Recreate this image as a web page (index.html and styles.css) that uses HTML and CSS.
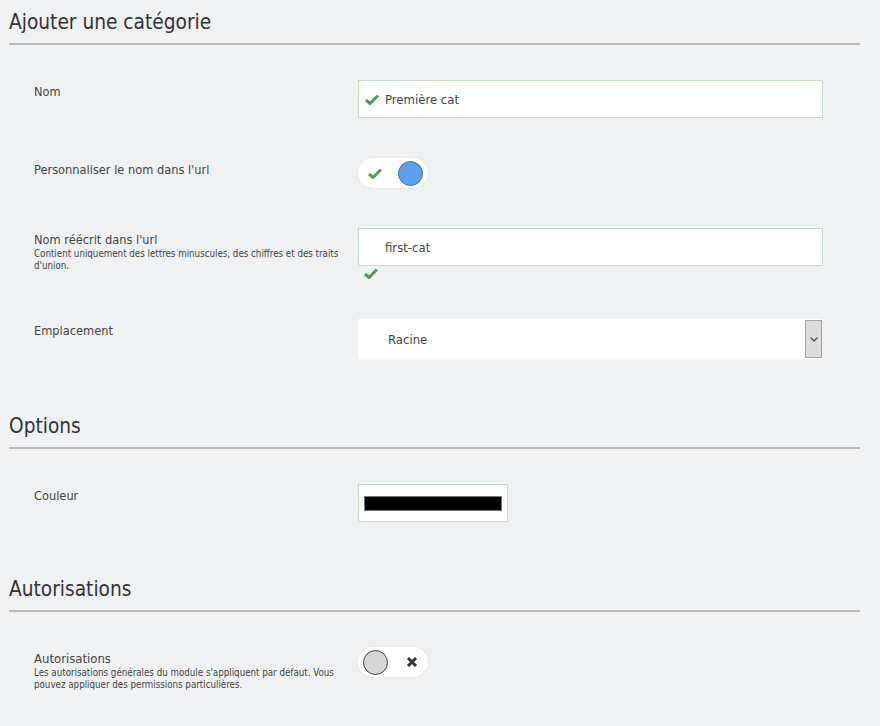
FILE: index.html
```html
<!DOCTYPE html>
<html lang="fr">
<head>
<meta charset="utf-8">
<title>Ajouter une catégorie</title>
<link rel="stylesheet" href="styles.css">
</head>
<body>
<form class="form">
  <section class="fieldset">
    <h2 class="legend">Ajouter une catégorie</h2>
    <div class="row">
      <div class="label"><span class="label-title">Nom</span></div>
      <div class="field">
        <div class="input valid">
          <svg class="check" viewBox="0 0 14 11" width="14" height="11"><path d="M1 6 L5 9.5 L13 1.5" fill="none" stroke="#4f9e55" stroke-width="3"/></svg>
          <span class="value">Première cat</span>
        </div>
      </div>
    </div>
    <div class="row">
      <div class="label"><span class="label-title">Personnaliser le nom dans l'url</span></div>
      <div class="field">
        <div class="toggle">
          <svg class="check" viewBox="0 0 14 11" width="14" height="11"><path d="M1 6 L5 9.5 L13 1.5" fill="none" stroke="#4f9e55" stroke-width="3"/></svg>
          <span class="knob on"></span>
        </div>
      </div>
    </div>
    <div class="row">
      <div class="label">
        <span class="label-title">Nom réécrit dans l'url</span>
        <span class="desc">Contient uniquement des lettres minuscules, des chiffres et des traits d'union.</span>
      </div>
      <div class="field">
        <div class="input valid plain"><span class="value">first-cat</span></div>
        <svg class="check below" viewBox="0 0 14 11" width="14" height="11"><path d="M1 6 L5 9.5 L13 1.5" fill="none" stroke="#4f9e55" stroke-width="3"/></svg>
      </div>
    </div>
    <div class="row">
      <div class="label"><span class="label-title">Emplacement</span></div>
      <div class="field">
        <div class="select">
          <span class="value">Racine</span>
          <span class="arrow"><svg viewBox="0 0 8 5" width="8" height="5"><path d="M0.5 0.5 L4 4 L7.5 0.5" fill="none" stroke="#444" stroke-width="1.2"/></svg></span>
        </div>
      </div>
    </div>
  </section>

  <section class="fieldset">
    <h2 class="legend">Options</h2>
    <div class="row">
      <div class="label"><span class="label-title">Couleur</span></div>
      <div class="field">
        <div class="color"><span class="swatch"></span></div>
      </div>
    </div>
  </section>

  <section class="fieldset">
    <h2 class="legend">Autorisations</h2>
    <div class="row">
      <div class="label">
        <span class="label-title big">Autorisations</span>
        <span class="desc">Les autorisations générales du module s'appliquent par défaut. Vous pouvez appliquer des permissions particulières.</span>
      </div>
      <div class="field">
        <div class="toggle">
          <span class="knob off"></span>
          <svg class="cross" viewBox="0 0 12 12" width="12" height="12"><path d="M2 2 L10 10 M10 2 L2 10" fill="none" stroke="#333" stroke-width="3"/></svg>
        </div>
      </div>
    </div>
  </section>
</form>
</body>
</html>
```

FILE: styles.css
```css
html, body {
  margin: 0;
  padding: 0;
}
body {
  background: #f0f1f3;
  color: #444;
  font-family: "DejaVu Sans Condensed", "DejaVu Sans", sans-serif;
  width: 880px;
  height: 726px;
  overflow: hidden;
}
.form {
  padding: 0 20px 0 9px;
}
.fieldset {
  margin-bottom: 45px;
}
.legend {
  margin: 0;
  padding: 10px 0 8px;
  font-size: 20.7px;
  line-height: 25px;
  font-weight: normal;
  color: #333;
  border-bottom: 2px solid #b9b9b9;
}
.row {
  display: grid;
  grid-template-columns: 310px 465px;
  column-gap: 14px;
  padding-left: 25px;
  margin-top: 40px;
}
.legend + .row {
  margin-top: 35px;
}
.label {
  display: flex;
  flex-direction: column;
  padding-top: 4px;
}
.label-title {
  font-size: 12.7px;
  line-height: 15px;
  color: #444;
}
.label-title.big {
  font-size: 13px;
  line-height: 15px;
}
.desc {
  font-size: 9.7px;
  line-height: 12px;
  color: #444;
  margin-top: 1px;
}
.field {
  display: flex;
  flex-direction: column;
  align-items: flex-start;
}
.input {
  box-sizing: border-box;
  width: 465px;
  height: 38px;
  background: #fff;
  border: 1px solid #c5dec5;
  display: flex;
  align-items: center;
  padding-left: 6px;
  font-size: 13px;
  color: #444;
}
.input .check {
  margin-right: 6px;
}
.input.plain {
  padding-left: 26px;
}
.check.below {
  margin: 2px 0 0 6px;
}
.toggle {
  box-sizing: border-box;
  width: 70px;
  height: 30px;
  background: #fff;
  border-radius: 15px;
  box-shadow: 0 0 3px rgba(0, 0, 0, 0.08);
  display: flex;
  align-items: center;
  justify-content: space-between;
  padding: 0 5px 0 10px;
}
.knob {
  box-sizing: border-box;
  width: 25px;
  height: 25px;
  border-radius: 50%;
}
.knob.on {
  background: #5fa0ec;
  border: 1px solid #3f6fa8;
}
.knob.off {
  background: #d6d6d6;
  border: 1px solid #444;
}
.toggle:has(.off) {
  padding: 0 10px 0 5px;
}
.select {
  box-sizing: border-box;
  width: 464px;
  height: 40px;
  background: #fff;
  display: flex;
  align-items: center;
  justify-content: space-between;
  padding: 1px 0 1px 30px;
  font-size: 13px;
  color: #444;
}
.arrow {
  box-sizing: border-box;
  width: 17px;
  height: 38px;
  background: #dcdcdc;
  border: 1px solid #a2a2a2;
  display: flex;
  align-items: center;
  justify-content: center;
}
.color {
  box-sizing: border-box;
  width: 150px;
  height: 38px;
  background: #fff;
  border: 1px solid #c5dec5;
  display: flex;
  align-items: center;
  padding: 0 5px;
}
.swatch {
  box-sizing: border-box;
  width: 138px;
  height: 15px;
  background: #000;
  border: 1px solid #777;
}
```
